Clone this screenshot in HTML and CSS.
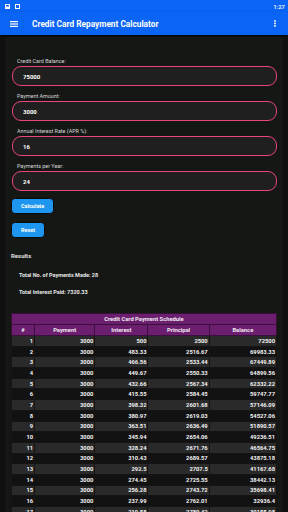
FILE: index.html
```html
<!DOCTYPE html>
<html lang="en">
<head>
  <meta charset="UTF-8" />
  <meta name="viewport" content="width=device-width, initial-scale=1" />
  <title>Credit Card Repayment Calculator</title>
  <link rel="stylesheet" href="styles.css">
</head>
<body>
  <div class="status-bar">
    <div class="status-icons">
      <svg width="5" height="5" viewBox="0 0 5 5"><rect x="0.5" y="0.5" width="4" height="4" fill="none" stroke="#fff" stroke-width="1"/><rect x="1" y="2.5" width="3" height="2" fill="#fff"/></svg>
      <svg width="5" height="5" viewBox="0 0 5 5"><rect x="0.5" y="0.5" width="4" height="4" fill="none" stroke="#fff" stroke-width="1"/></svg>
    </div>
    <span class="status-time">1:27</span>
  </div>

  <header class="app-bar">
    <svg class="menu-icon" width="8" height="6" viewBox="0 0 8 6"><rect y="0" width="8" height="1.2" fill="#fff"/><rect y="2.4" width="8" height="1.2" fill="#fff"/><rect y="4.8" width="8" height="1.2" fill="#fff"/></svg>
    <h1 class="app-title">Credit Card Repayment Calculator</h1>
    <svg class="more-icon" width="2" height="7" viewBox="0 0 2 7"><circle cx="1" cy="1" r="0.9" fill="#fff"/><circle cx="1" cy="3.5" r="0.9" fill="#fff"/><circle cx="1" cy="6" r="0.9" fill="#fff"/></svg>
  </header>

  <main class="panel">
    <form class="calc-form">
      <div class="field">
        <label for="balance">Credit Card Balance:</label>
        <input type="text" id="balance" value="75000" />
      </div>
      <div class="field">
        <label for="payment">Payment Amount:</label>
        <input type="text" id="payment" value="3000" />
      </div>
      <div class="field">
        <label for="apr">Annual Interest Rate (APR %):</label>
        <input type="text" id="apr" value="16" />
      </div>
      <div class="field">
        <label for="perYear">Payments per Year:</label>
        <input type="text" id="perYear" value="24" />
      </div>

      <div class="actions">
        <button type="button" class="button">Calculate</button>
        <button type="button" class="button">Reset</button>
      </div>
    </form>

    <h2 class="results-title">Results</h2>
    <p class="result-line">Total No. of Payments Made: 28</p>
    <p class="result-line">Total Interest Paid: 7320.33</p>

    <table class="schedule">
      <colgroup>
        <col class="col-num" />
        <col class="col-pay" />
        <col class="col-int" />
        <col class="col-prin" />
        <col class="col-bal" />
      </colgroup>
      <thead>
        <tr><th colspan="5" class="schedule-title">Credit Card Payment Schedule</th></tr>
        <tr><th>#</th><th>Payment</th><th>Interest</th><th>Principal</th><th>Balance</th></tr>
      </thead>
      <tbody>
        <tr><td>1</td><td>3000</td><td>500</td><td>2500</td><td>72500</td></tr>
        <tr><td>2</td><td>3000</td><td>483.33</td><td>2516.67</td><td>69983.33</td></tr>
        <tr><td>3</td><td>3000</td><td>466.56</td><td>2533.44</td><td>67449.89</td></tr>
        <tr><td>4</td><td>3000</td><td>449.67</td><td>2550.33</td><td>64899.56</td></tr>
        <tr><td>5</td><td>3000</td><td>432.66</td><td>2567.34</td><td>62332.22</td></tr>
        <tr><td>6</td><td>3000</td><td>415.55</td><td>2584.45</td><td>59747.77</td></tr>
        <tr><td>7</td><td>3000</td><td>398.32</td><td>2601.68</td><td>57146.09</td></tr>
        <tr><td>8</td><td>3000</td><td>380.97</td><td>2619.03</td><td>54527.06</td></tr>
        <tr><td>9</td><td>3000</td><td>363.51</td><td>2636.49</td><td>51890.57</td></tr>
        <tr><td>10</td><td>3000</td><td>345.94</td><td>2654.06</td><td>49236.51</td></tr>
        <tr><td>11</td><td>3000</td><td>328.24</td><td>2671.76</td><td>46564.75</td></tr>
        <tr><td>12</td><td>3000</td><td>310.43</td><td>2689.57</td><td>43875.18</td></tr>
        <tr><td>13</td><td>3000</td><td>292.5</td><td>2707.5</td><td>41167.68</td></tr>
        <tr><td>14</td><td>3000</td><td>274.45</td><td>2725.55</td><td>38442.13</td></tr>
        <tr><td>15</td><td>3000</td><td>256.28</td><td>2743.72</td><td>35698.41</td></tr>
        <tr><td>16</td><td>3000</td><td>237.99</td><td>2762.01</td><td>32936.4</td></tr>
        <tr><td>17</td><td>3000</td><td>219.58</td><td>2780.42</td><td>30155.98</td></tr>
        <tr><td>18</td><td>3000</td><td>201.04</td><td>2798.96</td><td>27357.02</td></tr>
      </tbody>
    </table>
  </main>
</body>
</html>
```

FILE: styles.css
```css
html, body {
  margin: 0;
  height: 512px;
  overflow: hidden;
}
body {
  font-family: Roboto, 'Liberation Sans', sans-serif;
  background: #0e0f0e;
  color: #e8e8e8;
}
.status-bar {
  height: 12px;
  background: #0a64f5;
  display: flex;
  align-items: center;
  justify-content: space-between;
  padding: 0 3px 0 5px;
}
.status-icons {
  display: flex;
  gap: 5px;
}
.status-icons svg {
  display: block;
}
.status-time {
  color: #fff;
  font-size: 6px;
  font-weight: 500;
}
.app-bar {
  height: 23px;
  background: #0a64f5;
  display: flex;
  align-items: center;
  padding: 0 12px 0 10px;
  box-shadow: 0 1px 2px rgba(0, 0, 0, 0.6);
}
.menu-icon {
  display: block;
  margin-right: 14px;
}
.app-title {
  flex: 1;
  margin: 0;
  color: #fff;
  font-size: 8.3px;
  font-weight: 700;
}
.more-icon {
  display: block;
}
.panel {
  margin: 2px 5px 0;
  background: #151715;
  padding: 21px 6px 20px 7px;
  height: 480px;
}
.field {
  margin-bottom: 7px;
}
label {
  display: block;
  font-size: 5.4px;
  line-height: 7px;
  margin: 0 0 1px 5px;
  color: #d8d8d8;
}
input {
  display: block;
  box-sizing: border-box;
  width: 100%;
  height: 20px;
  border: 1.5px solid #e8457d;
  border-radius: 9px;
  background: #1f1f1f;
  color: #fff;
  font-family: inherit;
  font-size: 6px;
  font-weight: 700;
  padding: 0 10px;
}
.actions {
  display: flex;
  flex-direction: column;
  align-items: flex-start;
  gap: 8px;
  margin-top: 2px;
  margin-left: -1px;
}
.button {
  height: 16px;
  background: #1e96f0;
  color: #fff;
  border: 1px solid #0a0a0a;
  border-radius: 4px;
  font-family: inherit;
  font-size: 5.5px;
  font-weight: 700;
  padding: 0 9px;
}
.results-title {
  margin: 14px 0 0 -1px;
  font-size: 6px;
  line-height: 8px;
  font-weight: 700;
  color: #e0e0e0;
}
.result-line {
  margin: 12px 0 0 7px;
  font-size: 5.5px;
  line-height: 6px;
  font-weight: 700;
  color: #e8e8e8;
}
.result-line + .result-line {
  margin-top: 11px;
}
.schedule {
  margin: 18px 0 0 -1px;
  width: 266px;
  table-layout: fixed;
  border-collapse: collapse;
  border: 1.5px solid #7a7a7a;
  font-size: 5.8px;
  font-weight: 700;
}
.col-num { width: 23px; }
.col-pay { width: 60px; }
.col-int { width: 53px; }
.col-prin { width: 61px; }
.col-bal { width: 67px; }
.schedule th {
  background: #6b1f6e;
  color: #f0e8f0;
  height: 10px;
  padding: 0;
  border: 1px solid #3a0f3c;
  font-weight: 700;
}
.schedule .schedule-title {
  border-bottom: 1px solid #3a0f3c;
}
.schedule td {
  height: 9.7px;
  padding: 0 1px 0 0;
  text-align: right;
  color: #f2f2f2;
  border: 1px solid #141414;
}
.schedule tbody tr:nth-child(odd) td {
  background: #2a2a2a;
}
.schedule tbody tr:nth-child(even) td {
  background: #121212;
}
```
